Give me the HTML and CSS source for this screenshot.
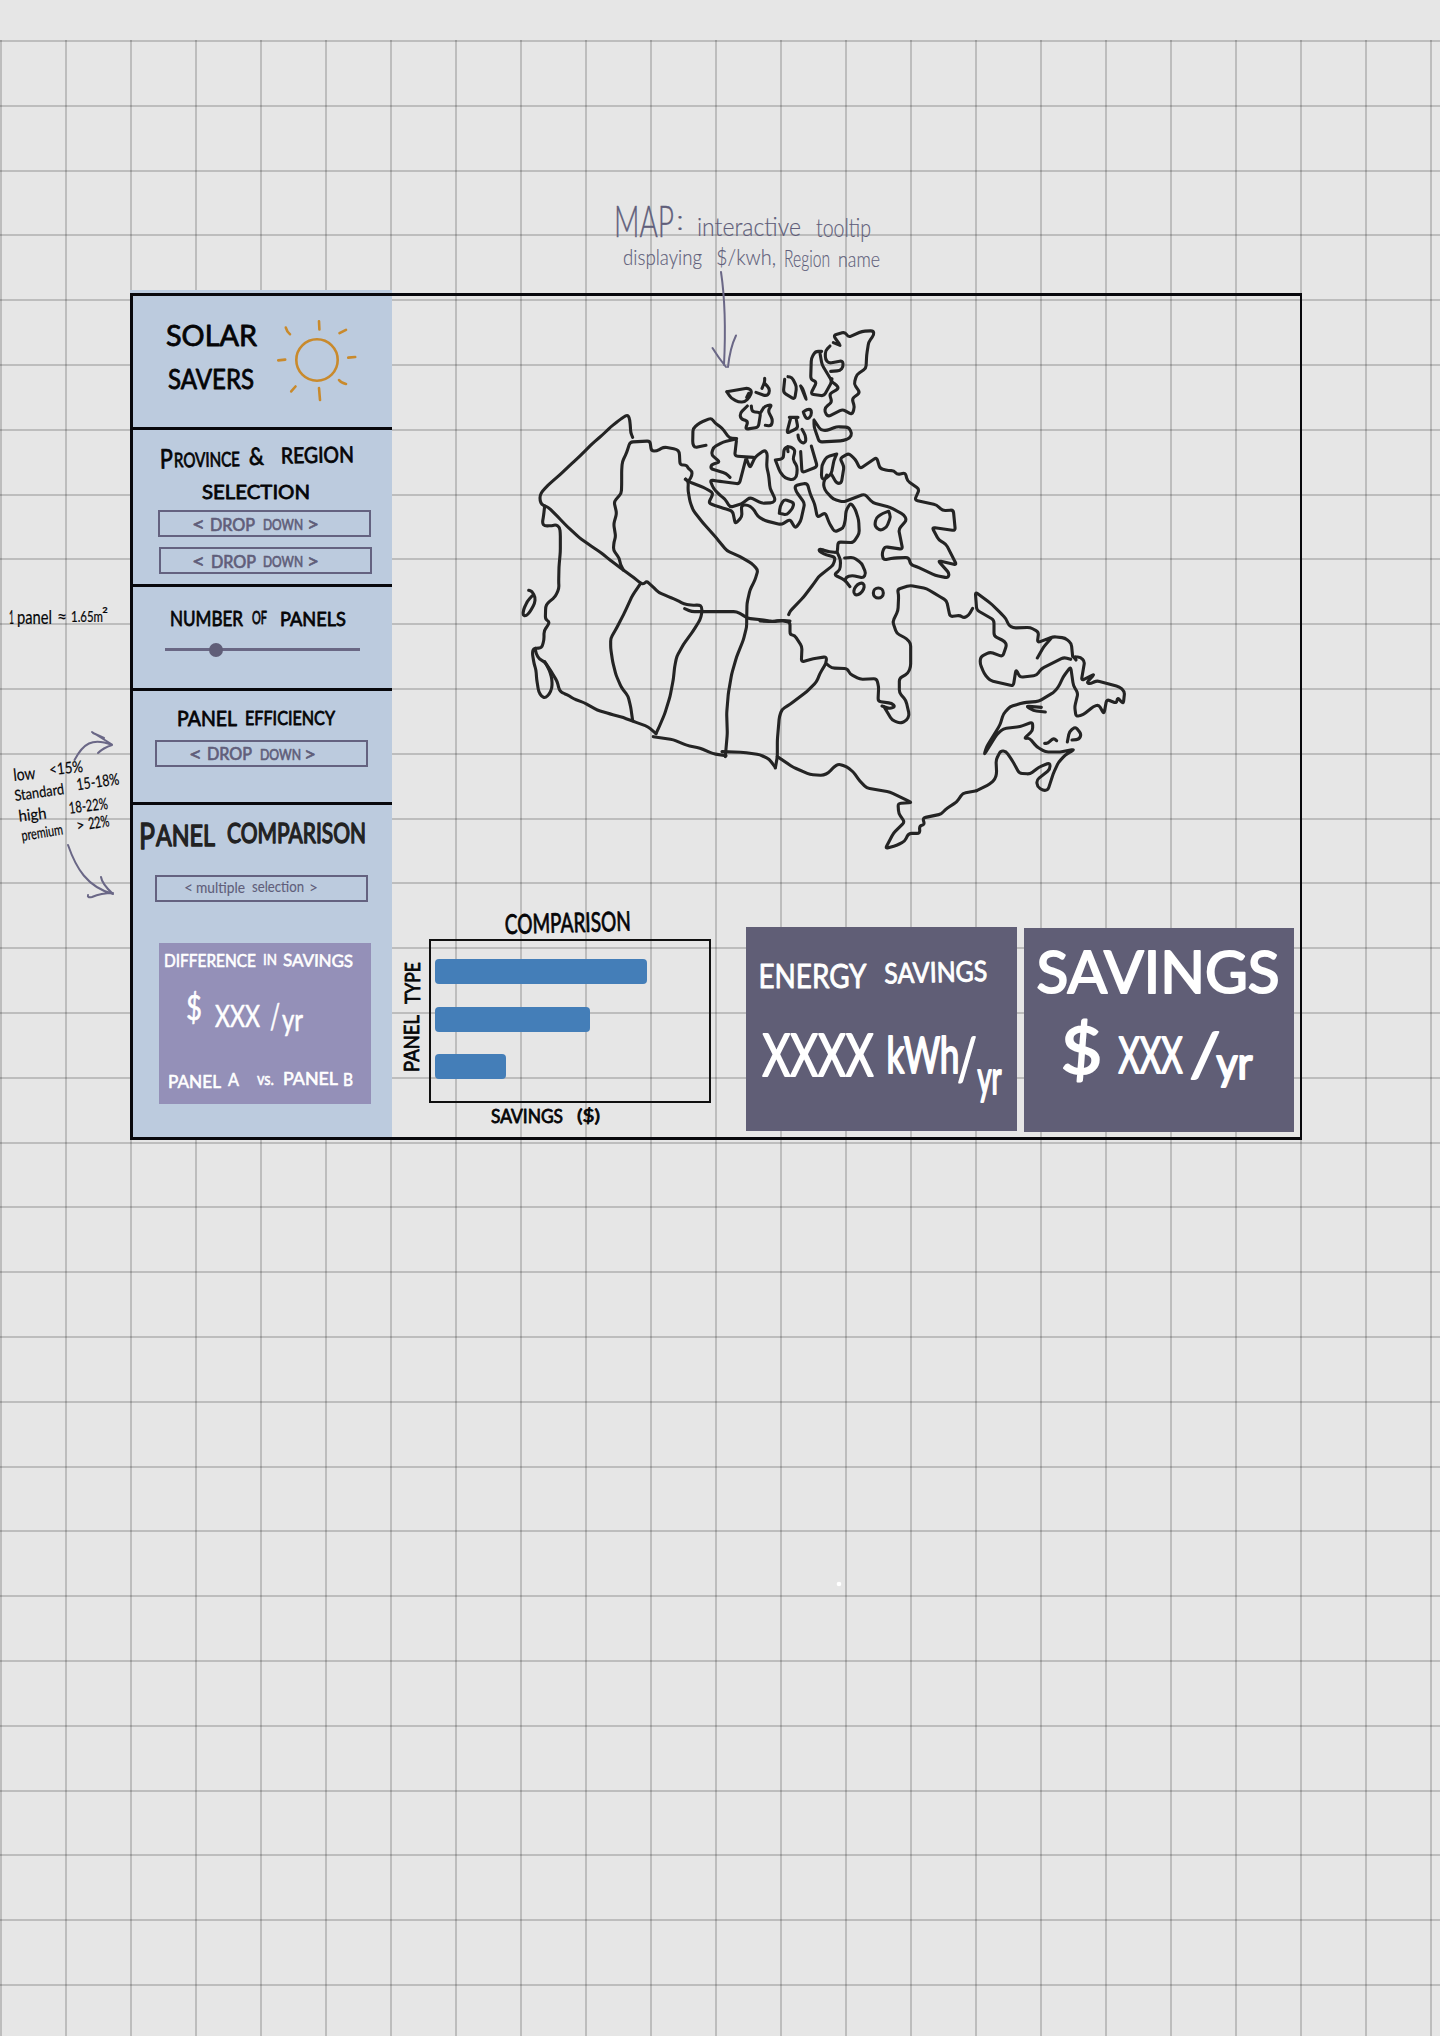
FILE: index.html
```html
<!DOCTYPE html>
<html lang="en">
<head>
<meta charset="utf-8">
<title>Solar Savers wireframe</title>
<link rel="stylesheet" href="styles.css">
<script src="ink.js" defer></script>
</head>
<body>
<main class="sheet">
  <div class="board-wrap">
    <div class="board">
      <aside class="sidebar">
        <section class="section brand">
          <svg class="ink" width="259" height="131" viewBox="133 296 259 131">
            <g class="medium">
              <text x="166" y="346" font-size="28" textLength="91">SOLAR</text>
              <text x="168" y="389" font-size="26" textLength="86">SAVERS</text>
            </g>
            <g class="sun">
              <circle cx="317" cy="360" r="20.7"/>
              <path d="M319 321.2L319.4 329.5M285.8 327.6Q287 332 290 334.2M339.5 333.2L346 329.8M278.2 360.4L285.2 359.6M348.2 357.6L355.2 357M339 380Q341 383 346 384M291.2 391.4L295.5 386.5M319 388L320 400"/>
            </g>
          </svg>
        </section>
        <section class="section region">
          <svg class="ink" width="259" height="80" viewBox="133 430 259 80">
            <g class="medium" transform="rotate(-1 250 465)">
              <text x="160" y="467" font-size="27" textLength="13">P</text>
              <text x="174" y="466" font-size="20" textLength="66">ROVINCE</text>
              <text x="249" y="465" font-size="24" textLength="15">&amp;</text>
              <text x="281" y="464" font-size="22" textLength="73">REGION</text>
            </g>
            <text class="medium" x="202" y="498.500" font-size="20" textLength="108">SELECTION</text>
          </svg>
          <div class="select">
            <svg class="ink plum" width="209" height="23" viewBox="160 512 209 23">
              <text x="192" y="531" font-size="20" textLength="13">&lt;</text>
              <text x="210" y="530.500" font-size="17" textLength="45">DROP</text>
              <text x="263" y="530" font-size="15" textLength="40">DOWN</text>
              <text x="307" y="531" font-size="20" textLength="12">&gt;</text>
            </svg>
          </div>
          <div class="select second">
            <svg class="ink plum" width="209" height="23" viewBox="161 549 209 23">
              <text x="192" y="568" font-size="20" textLength="13">&lt;</text>
              <text x="211" y="567.500" font-size="17" textLength="45">DROP</text>
              <text x="263" y="567" font-size="15" textLength="40">DOWN</text>
              <text x="307" y="568" font-size="20" textLength="12">&gt;</text>
            </svg>
          </div>
        </section>
        <section class="section panels">
          <svg class="ink medium" width="259" height="61" viewBox="133 587 259 61">
            <text x="170" y="625.500" font-size="21" textLength="73">NUMBER</text>
            <text x="252" y="624" font-size="17" textLength="15">OF</text>
            <text x="280" y="625.500" font-size="20" textLength="66">PANELS</text>
          </svg>
          <div class="slider"><span class="knob"></span></div>
        </section>
        <section class="section efficiency">
          <svg class="ink medium" width="259" height="49" viewBox="133 691 259 49">
            <text x="177" y="725.500" font-size="21" textLength="60">PANEL</text>
            <text x="245" y="725" font-size="19" textLength="90">EFFICIENCY</text>
          </svg>
          <div class="select">
            <svg class="ink plum" width="209" height="23" viewBox="157 742 209 23">
              <text x="189" y="761" font-size="20" textLength="13">&lt;</text>
              <text x="207" y="760" font-size="17" textLength="45">DROP</text>
              <text x="260" y="759.500" font-size="15" textLength="41">DOWN</text>
              <text x="304" y="761" font-size="20" textLength="12">&gt;</text>
            </svg>
          </div>
        </section>
        <section class="section compare">
          <svg class="ink charcoal" width="259" height="70" viewBox="133 805 259 70">
            <text x="139" y="849" font-size="37" textLength="16">P</text>
            <text x="156" y="846" font-size="28" textLength="59">ANEL</text>
            <text x="227" y="842.500" font-size="27" textLength="139">COMPARISON</text>
          </svg>
          <div class="select">
            <svg class="ink plum thin" width="209" height="23" viewBox="157 877 209 23">
              <text x="184" y="893" font-size="16" textLength="9">&lt;</text>
              <text x="196" y="892.500" font-size="15" textLength="49">multiple</text>
              <text x="252" y="892" font-size="15" textLength="52">selection</text>
              <text x="309" y="893" font-size="16" textLength="9">&gt;</text>
            </svg>
          </div>
          <div class="difference">
            <svg class="ink white" width="212" height="161" viewBox="159 943 212 161">
              <text x="164" y="966.500" font-size="17" textLength="92">DIFFERENCE</text>
              <text x="263" y="965" font-size="16" textLength="14">IN</text>
              <text x="283" y="966" font-size="17" textLength="70" transform="rotate(1 283 966)">SAVINGS</text>
              <text x="186" y="1020" font-size="35" textLength="16">$</text>
              <text x="215" y="1027" font-size="31" textLength="45">XXX</text>
              <text x="270" y="1029" font-size="34" textLength="10">/</text>
              <text x="282" y="1031" font-size="30" textLength="21">yr</text>
              <text x="168" y="1087.500" font-size="18" textLength="53">PANEL</text>
              <text x="228" y="1086" font-size="18" textLength="11">A</text>
              <text x="257" y="1085" font-size="17" textLength="17">vs.</text>
              <text x="283" y="1085" font-size="17" textLength="55">PANEL</text>
              <text x="343" y="1086" font-size="18" textLength="10">B</text>
            </svg>
          </div>
        </section>
      </aside>

      <section class="content">
        <svg class="map" width="907" height="605" viewBox="392 296 907 605">
          <!-- Yukon, the western provinces and the 60th parallel -->
          <g transform="translate(510 390) scale(.33333)">
            <path d="M368 142L362 128 361 106 358 82 352 75 342 80 326 92 302 111 276 136 248 160 216 192 186 220 150 254 120 280 98 302 90 316 90 332 95 343 104 348"/>
            <path d="M104 348L115 352 145 382 172 410 208 443 240 466 272 487 300 510 340 540 372 563 392 580 402 582 410 573 424 586 446 607 475 620 500 630 522 642 545 646 568 645 575 650 576 668 570 690 550 722 520 764 500 800 494 830 490 868 480 920 464 972 446 1014 438 1031"/>
            <path d="M104 348L101 375 97 400 104 408 126 407 138 404 149 412 151 430 151 485 147 530 146 575 147 595 136 620 112 640 107 650 106 688 118 695 114 706 102 722 102 750 95 774 70 775 67 790 72 820 78 840 80 868 86 905 95 920 106 924 118 912 126 894 126 868 118 840 104 815 88 808 78 790 76 775"/>
            <path d="M104 815L124 845 142 875 147 898 155 908 172 914 190 926 222 938 262 960 300 972 340 983 370 994 414 1010 438 1031"/>
            <path d="M56 601L66 604 76 622 74 640 60 666 48 678 39 676 40 660 52 634 66 618"/>
            <path d="M392 580L368 615 345 665 320 714 302 745 302 775 308 815 318 855 334 892 354 918 362 950 368 992"/>
            <path d="M340 540L331 522 328 505 310 480 312 455 317 440 311 402 320 370 312 335 334 310 335 285 335 240 337 215 350 188 360 156 420 153 424 183 440 183 462 171 500 178 508 186 510 225 530 225 534 235 546 244 546 256 538 270"/>
            <path d="M527 267L535 275 534 300 540 335 550 362 580 400 620 445 650 482 690 500 725 520 744 540 735 570 720 600 711 640 710 690 710 710 700 750 680 800 665 852 655 910 650 970 652 1030 646 1100"/>
            <path d="M524 656L545 665 680 665 700 676 712 685 770 691 790 695 812 691 840 693"/>
            <path d="M430 1040L490 1049 530 1066 570 1074 608 1091 648 1097M636 1085L700 1087 750 1094 778 1108 796 1132"/>
          </g>
          <!-- Arctic coast and islands -->
          <g transform="translate(670 320) scale(.33333)">
            <path d="M46 478L58 486 100 502 126 516 128 524 116 548 126 554 160 564 188 574 196 612 216 590 214 556 232 554 250 566 262 588 285 602 334 614 360 598 376 625 392 604 404 550 378 514 374 498 392 492 412 490 420 520 434 552 442 592 466 578 478 610 494 636 520 624 526 600 528 572 542 548 556 568 566 600 568 640 550 668 504 666 502 698 470 694 450 686 446 692 460 702 496 712 490 735 446 770 432 790 400 832 360 874 356 884"/>
            <path d="M502 698L512 720 510 750 492 764 524 780 540 800M524 714L550 712 575 730 588 760 580 774 545 766 528 772 526 782"/>
            <ellipse cx="567" cy="807" rx="12" ry="20" transform="rotate(38 567 807)"/>
            <circle cx="625" cy="819" r="15"/>
            <path d="M180 472L168 460 122 446 124 434 150 426 124 404 130 382 160 366 200 356 194 408 250 412M228 415L208 492 150 484 120 480 130 505 150 526 166 538 180 562 214 552 240 532 275 550 310 548 316 538 300 505 296 465 290 440 292 400 284 390 256 410 240 444 230 418"/>
            <path d="M108 376L74 383 68 372 69 325 90 308 124 294 134 308 156 324 178 354 200 356"/>
            <path d="M170 215L235 204 246 214 238 232 225 246 205 246 184 235 170 215M230 232L236 220"/>
            <path d="M284 175L284 186 276 205M284 190L298 205 298 220 288 228 258 217"/>
            <path d="M232 258L210 280 212 296 234 304 226 328 265 322 272 278 246 275 244 258M272 278L284 258 306 254 294 272 308 300 304 318 286 316"/>
            <path d="M344 178L340 218 374 238 380 200 366 172 354 170M392 198L410 242 398 205 392 198"/>
            <path d="M400 276L410 268 424 268 424 288 412 298 404 288 400 276M358 292L384 292M362 294L350 340 384 324 378 294"/>
            <path d="M396 328L406 345 408 366 396 370 386 358 384 345"/>
            <path d="M432 300L432 320 448 366 520 362 540 354 546 340 536 322 500 320 470 332 452 330 432 300"/>
            <path d="M424 378L442 440 396 458 392 395"/>
            <path d="M316 420L340 416 342 386 356 378 374 388 374 400 368 418 382 440 380 470 368 480 345 474 330 456 316 420M352 380L354 395"/>
            <path d="M328 580L330 560 342 538 372 548 368 565 350 585 328 580"/>
            <path d="M480 78L466 92 466 118 476 130 518 122 520 140 510 152 482 154M510 76L490 68M508 72L490 46 525 36 535 52 576 34 610 32 612 44 596 66 590 105 588 145 560 164 552 192 570 218 546 236 554 262 546 284 518 268 474 290 464 276 466 262 486 246 478 222 506 206 500 195 484 185 486 176"/>
            <path d="M455 94L436 94 424 115 422 178 440 186 422 222 462 228 486 184 456 134 450 100"/>
            <path d="M500 402L470 410 456 435 454 472 462 480 484 462 492 420 500 402M484 462L500 490 514 490 522 440 510 415 536 400 556 418 570 446 620 412 630 446 656 452 672 452 682 464 706 458 712 482 748 508 734 540 800 555 818 572 850 570 856 632 786 622 806 660 828 672 860 735 804 722 838 760 834 774 796 766 740 740 722 734 716 712 672 714 640 720 636 700 644 680 698 688 686 628 710 600 702 584 660 562 608 548 584 522 520 546 490 538 464 510 460 490 470 465"/>
            <path d="M656 574L662 590 650 622 630 632 614 618 618 594 638 580 656 574"/>
          </g>
          <!-- Hudson Bay, Ontario and Quebec -->
          <g transform="translate(760 540) scale(.33333)">
            <path d="M0 243L35 245 60 242 90 246 90 284 104 286 126 320 124 366 160 356 200 350 198 370 180 400 170 425 140 455 90 493 66 508 58 530 52 600 52 650 46 684"/>
            <path d="M200 372L215 384 262 386 270 402 300 418 350 416 356 440 354 484 395 490 406 500 390 506 366 498M372 500L396 540 420 550 440 542 448 525 438 482 418 458 418 415 444 400 452 380 452 310 440 296 410 280 398 245 414 212 416 165 412 148 450 136 500 146 530 164 560 182 570 230 600 226 612 234 626 226 638 205"/>
            <path d="M52 650L100 682 150 704 190 706 206 698 222 680 236 672 260 680 280 696 300 724 320 744 390 756 456 788 414 790 416 820 434 846 400 880 376 926 410 916 434 904 446 880 480 880 478 858 494 854 488 834 545 822 556 808 590 786 608 760 650 752"/>
          </g>
          <!-- Labrador, Newfoundland and the Maritimes -->
          <g transform="translate(940 560) scale(.33333)">
            <path d="M110 692L150 672 165 658 170 640 168 600 182 572 198 574 216 600 238 640 270 642 296 622 330 608 330 628 290 660 292 680 310 692 324 690 340 640 356 606 376 585 404 568 360 576 316 576 290 560 268 534 252 536 278 512 278 486 240 500 190 506 170 524 132 585 140 560 180 495 190 462 210 440 250 428 296 424 340 398 356 380 370 350 392 320 400 376 414 400 404 440 408 470 430 464 460 440 476 434 492 462 500 418 530 430 532 412 550 432 554 395 538 380 470 362 450 372 440 368 464 342 424 362 434 304 422 292 400 290 408 300"/>
            <path d="M392 298L372 292 304 326 290 346 240 352 228 328 220 378 150 362 132 340 120 310 122 290 150 276 188 290 200 255 194 244 162 228 162 180 110 150 106 96 150 128 178 155 198 176 206 196 220 204 270 202 296 216 292 248 340 230 375 234 394 250 398 290M336 232L310 262 292 294"/>
            <path d="M304 442L258 438 280 452 316 456M314 550L324 550 340 534 350 542M382 546L388 515 406 500 424 522 418 538 396 540"/>
          </g>
        </svg>
        <div class="results">
          <div class="chart">
            <svg class="ink medium" width="318" height="38" viewBox="393 901 318 38">
              <text x="505" y="934" font-size="27" textLength="126" transform="rotate(-1.500 505 934)">COMPARISON</text>
            </svg>
            <div class="chart-row">
              <svg class="ink medium" width="36" height="164" viewBox="393 939 36 164">
                <text transform="translate(419 1072) rotate(-90)" font-size="21" textLength="57">PANEL</text>
                <text transform="translate(420 1004) rotate(-90)" font-size="21" textLength="42">TYPE</text>
              </svg>
              <div class="plot">
                <div class="bar" style="width:212px"></div>
                <div class="bar" style="width:155px"></div>
                <div class="bar" style="width:71px"></div>
              </div>
            </div>
            <svg class="ink medium" width="318" height="32" viewBox="393 1103 318 32">
              <text x="491" y="1123" font-size="19" textLength="72">SAVINGS</text>
              <text x="577" y="1122" font-size="18" textLength="23">($)</text>
            </svg>
          </div>
          <div class="card">
            <svg class="ink white" width="271" height="204" viewBox="746.500 926.500 271 204">
              <text x="759" y="987" font-size="33" textLength="108" class="pen3">ENERGY</text>
              <text x="885" y="983" font-size="28" textLength="103" class="pen3" transform="rotate(-1.500 885 983)">SAVINGS</text>
              <g class="pen5">
                <text x="763" y="1075" font-size="58" textLength="111">XXXX</text>
                <text x="887" y="1072" font-size="50" textLength="73">kWh</text>
                <text x="958" y="1079" font-size="58" textLength="19">/</text>
                <text x="978" y="1093" font-size="46" textLength="24">yr</text>
              </g>
            </svg>
          </div>
          <div class="card savings">
            <svg class="ink white" width="271" height="204" viewBox="1024.500 927.500 271 204">
              <g class="pen5">
                <text x="1037" y="992" font-size="58" textLength="243">SAVINGS</text>
                <text x="1061" y="1073" font-size="66" textLength="42">$</text>
                <text x="1119" y="1072" font-size="50" textLength="64">XXX</text>
                <text x="1190" y="1075" font-size="60" textLength="31">/</text>
                <text x="1217" y="1078" font-size="44" textLength="36">yr</text>
              </g>
            </svg>
          </div>
        </div>
      </section>
    </div>
  </div>

  <!-- Margin notes written over the sheet -->
  <svg class="notes ink" width="1440" height="2036" viewBox="0 0 1440 2036">
    <g class="faint">
      <text x="614" y="237" font-size="43" textLength="60" class="pen1">MAP</text>
      <text x="676" y="230" font-size="28" textLength="8">:</text>
      <text x="697" y="236" font-size="25" textLength="104">interactive</text>
      <text x="816" y="237" font-size="25" textLength="55">tooltip</text>
      <text x="623" y="265" font-size="22" textLength="79">displaying</text>
      <text x="716" y="265" font-size="21" textLength="60">$/kwh,</text>
      <text x="784" y="267" font-size="23" textLength="46">Region</text>
      <text x="838" y="267" font-size="22" textLength="42">name</text>
    </g>
    <path class="arrow" d="M721 272C724 292 726 325 724 365M712.500 348Q718 357 726 367M736 335.500Q730 348 728 367"/>
    <g class="jot">
      <text x="9" y="624" font-size="20" textLength="5">1</text>
      <text x="17" y="624" font-size="19" textLength="35">panel</text>
      <text x="57" y="623" font-size="18" textLength="10">≈</text>
      <text x="71" y="621.500" font-size="15" textLength="32">1.65m</text>
      <text x="102" y="621" font-size="17" textLength="6">²</text>
      <g transform="rotate(-6 15 780)">
        <text x="14" y="781" font-size="17" textLength="22">low</text>
        <text x="50" y="779" font-size="16" textLength="34">&lt;15%</text>
      </g>
      <g transform="rotate(-8 15 800)">
        <text x="15" y="801" font-size="15" textLength="50">Standard</text>
        <text x="78" y="799" font-size="16" textLength="43">15-18%</text>
      </g>
      <g transform="rotate(-7 18 820)">
        <text x="19" y="822" font-size="16" textLength="28">high</text>
        <text x="70" y="820" font-size="16" textLength="39">18-22%</text>
      </g>
      <g transform="rotate(-9 22 840)">
        <text x="22" y="841" font-size="15" textLength="42">premium</text>
        <text x="78" y="840" font-size="16" textLength="8">&gt;</text>
        <text x="90" y="840" font-size="16" textLength="21">22%</text>
      </g>
    </g>
    <path class="arrow" d="M74.500 760C83 744 92 737 112 745M92 732L112 744.500M93 733L104 738M98 753Q103 748 112 745"/>
    <path class="arrow" d="M68 845C76 868 87 887 113 894M101 877Q102 884 113 894M88 895Q87 898 92 897Q101 893 113 893"/>
    <circle cx="839" cy="1584" r="2.300" fill="#fff"/>
  </svg>
</main>
</body>
</html>
```
FILE: ink.js
```js
// Let every lettered word fill its measured width, glyphs included.
document.querySelectorAll('.ink text[textLength]').forEach(function (t) {
  t.setAttribute('lengthAdjust', 'spacingAndGlyphs');
});

// Round the corners of the coastlines so that they read as pen strokes.
function soften(points) {
  var d = 'M' + points[0].join(' ');
  function toward(from, to) {
    var dx = to[0] - from[0], dy = to[1] - from[1];
    var len = Math.hypot(dx, dy) || 1;
    var cut = Math.min(9, len / 2);
    return [from[0] + dx / len * cut, from[1] + dy / len * cut];
  }
  for (var i = 1; i < points.length - 1; i++) {
    var p = points[i];
    d += 'L' + toward(p, points[i - 1]).join(' ') +
         'Q' + p.join(' ') + ' ' + toward(p, points[i + 1]).join(' ');
  }
  return d + 'L' + points[points.length - 1].join(' ');
}

document.querySelectorAll('.map path').forEach(function (path) {
  var strokes = path.getAttribute('d').split('M').filter(Boolean);
  path.setAttribute('d', strokes.map(function (s) {
    var n = s.match(/[\d.]+/g).map(Number), points = [];
    for (var i = 0; i < n.length; i += 2) points.push([n[i], n[i + 1]]);
    return soften(points);
  }).join(''));
});
```
FILE: styles.css
```css
* { box-sizing: border-box; }

body {
  margin: 0;
  height: 2036px;
  overflow: hidden;
  background: #e6e6e6;
  font-family: Lato, "Open Sans", sans-serif;
}

.sheet {
  position: relative;
  height: 1996px;
  margin-top: 40px;
  padding: 250px 138px 0 130px;
  background:
    repeating-linear-gradient(to right, rgba(0, 0, 0, .18) 0 2px, transparent 2px 65px),
    repeating-linear-gradient(to bottom, rgba(0, 0, 0, .18) 0 2px, transparent 2px 64.8px);
}

body::before { content: ""; display: table; }

.board-wrap {
  width: 1172px;
  padding-top: 3px;
  background: linear-gradient(#bccbde, #bccbde) no-repeat 0 0 / 262px 100%;
}

.board {
  display: flex;
  height: 847px;
  border: 3px solid #08080c;
  border-right-width: 2px;
}

.sidebar {
  display: flex;
  flex-direction: column;
  width: 259px;
}

.section { border-bottom: 3px solid #08080c; }
.brand { height: 134px; }
.region { height: 157px; }
.panels { height: 104px; }
.efficiency { height: 114px; }
.compare { height: 332px; border-bottom: 0; }

svg { display: block; overflow: visible; }

.select {
  width: 213px;
  height: 27px;
  margin-left: 22px;
  border: 2px solid #646280;
}
.region .select { margin-left: 25px; }
.region .second { margin: 10px 0 0 26px; }

.slider {
  position: relative;
  width: 195px;
  height: 3px;
  margin-left: 32px;
  background: #696784;
}
.knob {
  position: absolute;
  left: 44px;
  top: -5px;
  width: 14px;
  height: 14px;
  border-radius: 50%;
  background: #605e78;
}

.difference {
  width: 212px;
  height: 161px;
  margin: 41px 0 0 26px;
  background: #9490b8;
}

.content { width: 907px; }

.results {
  display: flex;
  align-items: flex-start;
}
.chart { width: 318px; margin-left: 1px; }
.chart-row { display: flex; }
.plot {
  display: flex;
  flex-direction: column;
  gap: 22.5px;
  width: 282px;
  height: 164px;
  padding: 18px 0 0 4px;
  border: 2px solid #101010;
}
.bar {
  height: 25px;
  border-radius: 4px;
  background: #447eb8;
}
.card {
  width: 270.5px;
  height: 204px;
  margin: 25.5px 0 0 35px;
  background: #605e76;
}
.card.savings { margin: 26.5px 0 0 7px; }

/* Lettering: glyphs thickened with a round pen */
.ink text {
  stroke-linejoin: round;
  stroke-linecap: round;
}
.medium { fill: #050507; stroke: #050507; stroke-width: .8; }
.charcoal { fill: #222; stroke: #222; stroke-width: 1.4; }
.plum { fill: #605e7a; stroke: #605e7a; stroke-width: .7; }
.plum.thin { stroke-width: .1; }
.white { fill: #fff; stroke: #fff; stroke-width: .6; }
.pen3 { stroke-width: .9; }
.pen5 { stroke-width: 2; }
.faint text { font-weight: 300; fill: #605e7a; stroke: #605e7a; stroke-width: .15; }
.faint .pen1 { stroke-width: .4; }
.jot text { fill: #050507; stroke: #050507; stroke-width: .2; }

.sun {
  fill: none;
  stroke: #c98a2c;
  stroke-width: 2.6;
  stroke-linecap: round;
}

.map g {
  fill: none;
  stroke: #242424;
  stroke-width: 9.3;
  stroke-linecap: round;
  stroke-linejoin: round;
}

.notes {
  position: absolute;
  left: 0;
  top: -40px;
}
.arrow {
  fill: none;
  stroke: #6a6786;
  stroke-width: 2;
  stroke-linecap: round;
}
```
